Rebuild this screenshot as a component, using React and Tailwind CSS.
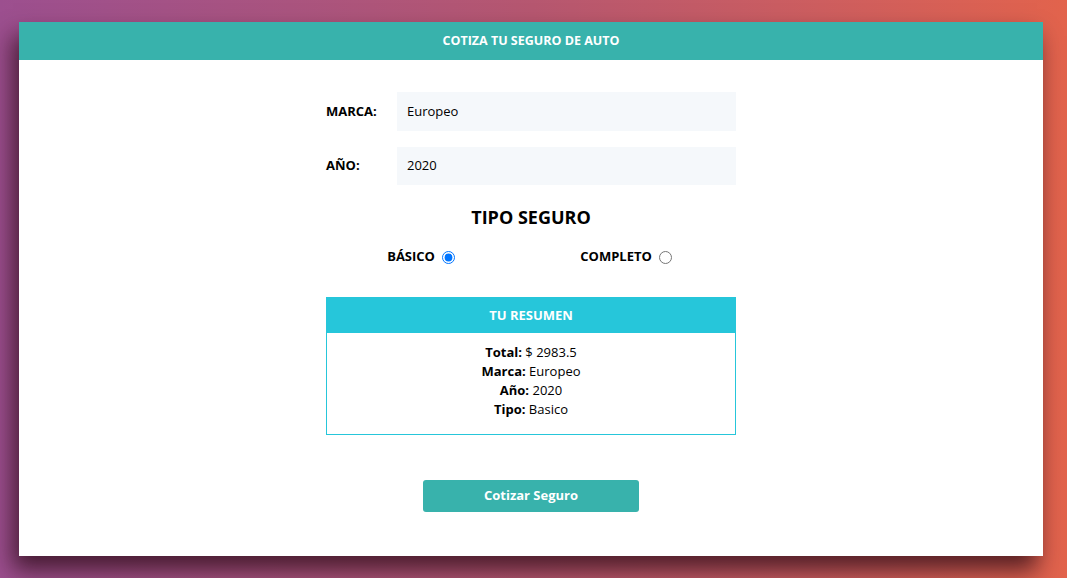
export default function App() {
  const font = { fontFamily: '"Open Sans", "Noto Sans", sans-serif' };
  return (
    <div className="w-[1067px] h-[578px] overflow-hidden bg-gradient-to-r from-[#9c4f8f] via-[#b65770] to-[#e2634c] pt-[22px] pl-[19px]" style={font}>
      <div className="w-[1024px] h-[534px] bg-white shadow-[-6px_14px_22px_rgba(40,10,20,0.75)]">
        <div className="h-[38px] bg-[#38b2ac] flex items-center justify-center text-white text-[12.5px] font-bold">
          COTIZA TU SEGURO DE AUTO
        </div>

        <div className="w-[410px] mx-auto pt-[32px]">
          <div className="flex items-center mb-[16px]">
            <label className="w-[71px] text-[13px] font-bold text-black">MARCA:</label>
            <div className="flex-1 h-[39px] bg-[#f5f8fb] flex items-center px-[10px] text-[13px] text-black">Europeo</div>
          </div>
          <div className="flex items-center">
            <label className="w-[71px] text-[13px] font-bold text-black">AÑO:</label>
            <div className="flex-1 h-[38px] bg-[#f5f8fb] flex items-center px-[10px] text-[13px] text-black">2020</div>
          </div>

          <h2 className="text-center text-[18px] font-bold text-black mt-[20px] leading-[24px]">TIPO SEGURO</h2>

          <div className="flex justify-around items-center mt-[18px] h-[20px]">
            <label className="flex items-center gap-[4px] text-[13px] font-bold text-black">
              BÁSICO
              <input type="radio" name="tipo" defaultChecked className="m-[3px]" />
            </label>
            <label className="flex items-center gap-[4px] text-[13px] font-bold text-black">
              COMPLETO
              <input type="radio" name="tipo" className="m-[3px]" />
            </label>
          </div>

          <div className="mt-[30px] border border-[#26c6da] h-[138px]">
            <div className="h-[35px] bg-[#26c6da] flex items-center justify-center text-white text-[13px] font-bold">
              TU RESUMEN
            </div>
            <div className="pt-[10px] text-center text-[13px] text-black leading-[19px]">
              <p><span className="font-bold">Total:</span> $ 2983.5</p>
              <p><span className="font-bold">Marca:</span> Europeo</p>
              <p><span className="font-bold">Año:</span> 2020</p>
              <p><span className="font-bold">Tipo:</span> Basico</p>
            </div>
          </div>

          <div className="flex justify-center mt-[45px]">
            <button className="w-[216px] h-[32px] rounded-[3px] bg-[#38b2ac] text-white text-[13px] font-bold">
              Cotizar Seguro
            </button>
          </div>
        </div>
      </div>
    </div>
  );
}
